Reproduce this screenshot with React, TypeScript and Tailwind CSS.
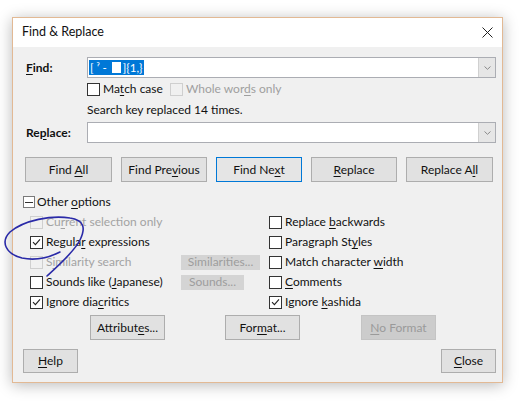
import React from "react";

const U = ({ c }: { c: string }) => <span className="underline underline-offset-2 decoration-1">{c}</span>;

const Check = ({ checked = false, disabled = false }: { checked?: boolean; disabled?: boolean }) => (
  <span
    className={
      "inline-flex items-center justify-center w-[13px] h-[13px] border shrink-0 " +
      (disabled ? "border-[#cfcfcf] bg-[#f0f0f0]" : "border-[#333333] bg-white")
    }
  >
    {checked && (
      <svg width="9" height="8" viewBox="0 0 9 8">
        <path d="M1 4.2 L3.4 6.6 L8 1.4" fill="none" stroke="#222" strokeWidth="1.1" />
      </svg>
    )}
  </span>
);

const Btn = ({ children, w, primary = false }: { children: React.ReactNode; w: string; primary?: boolean }) => (
  <div
    className={
      "h-[25px] flex items-center justify-center border text-[12px] text-[#111] " +
      w +
      " " +
      (primary ? "border-[#0078d7] bg-[#e5e5e5]" : "border-[#adadad] bg-[#e1e1e1]")
    }
  >
    <span className="whitespace-pre">{children}</span>
  </div>
);

const Combo = ({ children }: { children?: React.ReactNode }) => (
  <div className="ml-[61px] w-[409px] h-[21px] flex border border-[#abadb3] bg-white">
    <div className="flex-1 flex items-center pl-[1px]">{children}</div>
    <div className="w-[17px] h-full bg-[#e6e6e6] border-l border-[#d0d0d0] flex items-center justify-center">
      <svg width="7" height="4" viewBox="0 0 7 4">
        <path d="M0.5 0.5 L3.5 3.3 L6.5 0.5" fill="none" stroke="#8a8a8a" strokeWidth="1" />
      </svg>
    </div>
  </div>
);

export default function App() {
  return (
    <div className="relative w-[525px] h-[404px] bg-white overflow-hidden font-['Segoe_UI','Lato','Noto_Sans',sans-serif] text-[12px] text-[#111]">
      <div className="pt-[17px] pl-[12px]">
        <div className="w-[491px] h-[366px] border border-[#e2b994] shadow-[0_2px_14px_rgba(0,0,0,0.28)] flex flex-col">
          {/* title bar */}
          <div className="h-[29px] bg-white flex items-center justify-between pl-[9px] pr-[9px] shrink-0">
            <span className="text-[12.5px] text-[#111]">Find &amp; Replace</span>
            <svg width="11" height="11" viewBox="0 0 11 11">
              <path d="M0.5 0.5 L10.5 10.5 M10.5 0.5 L0.5 10.5" stroke="#222" strokeWidth="1" />
            </svg>
          </div>
          {/* body */}
          <div className="flex-1 bg-[#f0f0f0] flex flex-col">
            {/* Find row */}
            <div className="mt-[10px] h-[21px] flex items-center pl-[13px]">
              <span className="w-0 whitespace-nowrap font-bold"><U c="F" />ind:</span>
              <Combo>
                <span className="h-[15px] bg-[#0078d7] text-white flex items-center px-[1px] text-[11.5px] whitespace-pre">
                  [ ˀ - <span className="inline-block w-[9px] h-[11px] bg-white mx-[2px]"></span>]{"{1,}"}
                </span>
              </Combo>
            </div>
            {/* Match case row */}
            <div className="mt-[4px] h-[14px] flex items-center pl-[74px]">
              <Check />
              <span className="ml-[3px]">Ma<U c="t" />ch case</span>
              <span className="ml-[7px] flex"><Check disabled /></span>
              <span className="ml-[3px] text-[#9f9f9f]">Whole wor<U c="d" />s only</span>
            </div>
            {/* status */}
            <div className="mt-[7px] h-[14px] flex items-center pl-[74px]">
              <span>Search key replaced 14 times.</span>
            </div>
            {/* Replace row */}
            <div className="mt-[5px] h-[21px] flex items-center pl-[13px]">
              <span className="w-0 whitespace-nowrap font-bold">Re<U c="p" />lace:</span>
              <Combo />
            </div>
            {/* buttons */}
            <div className="mt-[14px] pl-[12px] w-[480px] flex justify-between">
              <Btn w="w-[87px]">Find <U c="A" />ll</Btn>
              <Btn w="w-[86px]">Find Pre<U c="v" />ious</Btn>
              <Btn w="w-[86px]" primary>Find Ne<U c="x" />t</Btn>
              <Btn w="w-[86px]"><U c="R" />eplace</Btn>
              <Btn w="w-[87px]">Replace A<U c="l" />l</Btn>
            </div>
            {/* options grid */}
            <div className="mt-[10px] grid grid-cols-[243px_1fr] grid-rows-[repeat(6,20px)] pl-[13px]">
              <div className="col-span-2 flex items-center -ml-[3px]">
                <span className="w-[12px] h-[12px] border border-[#7a7a7a] bg-white flex items-center justify-center">
                  <span className="w-[8px] h-[1px] bg-[#333]"></span>
                </span>
                <span className="ml-[2px]">Other <U c="o" />ptions</span>
              </div>
              {/* rows */}
              <div className="flex items-center pl-[4px] text-[#a3a3a3]">
                <Check disabled />
                <span className="ml-[3px]">Cu<U c="r" />rent selection only</span>
              </div>
              <div className="flex items-center">
                <Check />
                <span className="ml-[3px]">Replace <U c="b" />ackwards</span>
              </div>
              <div className="flex items-center pl-[4px]">
                <Check checked />
                <span className="ml-[3px]">Regula<U c="r" /> expressions</span>
              </div>
              <div className="flex items-center">
                <Check />
                <span className="ml-[3px]">Paragraph St<U c="y" />les</span>
              </div>
              <div className="flex items-center pl-[4px] text-[#a3a3a3]">
                <Check disabled />
                <span className="ml-[3px] w-[135px]">S<U c="i" />milarity search</span>
                <span className="h-[15px] w-[79px] bg-[#d4d4d4] flex items-center justify-center text-[#9d9d9d]">Similarities...</span>
              </div>
              <div className="flex items-center">
                <Check />
                <span className="ml-[3px]">Match character <U c="w" />idth</span>
              </div>
              <div className="flex items-center pl-[4px]">
                <Check />
                <span className="ml-[3px] w-[135px]">Sounds like (<U c="J" />apanese)</span>
                <span className="h-[15px] w-[63px] bg-[#d4d4d4] flex items-center justify-center text-[#9d9d9d]">Sounds...</span>
              </div>
              <div className="flex items-center">
                <Check />
                <span className="ml-[3px]"><U c="C" />omments</span>
              </div>
              <div className="flex items-center pl-[4px]">
                <Check checked />
                <span className="ml-[3px]">Ignore dia<U c="c" />ritics</span>
              </div>
              <div className="flex items-center">
                <Check checked />
                <span className="ml-[3px]">Ignore <U c="k" />ashida</span>
              </div>
            </div>
            {/* attributes row */}
            <div className="mt-[3px] flex pl-[77px]">
              <Btn w="w-[75px]">Attribut<U c="e" />s...</Btn>
              <div className="ml-[60px]"><Btn w="w-[75px]">For<U c="m" />at...</Btn></div>
              <div className="ml-[61px] h-[25px] w-[75px] flex items-center justify-center bg-[#cccccc] border border-[#c4c4c4] text-[#9a9a9a]">
                <span><U c="N" />o Format</span>
              </div>
            </div>
            {/* help/close */}
            <div className="mt-[9px] flex justify-between pl-[10px] pr-[6px]">
              <div className="h-[24px] w-[55px] flex items-center justify-center border border-[#adadad] bg-[#e1e1e1]"><span><U c="H" />elp</span></div>
              <div className="h-[24px] w-[55px] flex items-center justify-center border border-[#adadad] bg-[#e1e1e1]"><span><U c="C" />lose</span></div>
            </div>
          </div>
        </div>
      </div>
      {/* hand-drawn annotation */}
      <svg className="absolute left-0 top-0 pointer-events-none" width="525" height="404" viewBox="0 0 525 404">
        <path
          d="M47 276 C58 266 74 252 80 240 C86 228 84 220 70 218 C52 215 24 220 10 232 C0 242 6 254 22 258 C36 261 50 257 60 252"
          fill="none"
          stroke="#2a2aa8"
          strokeWidth="1.6"
          strokeLinecap="round"
        />
      </svg>
    </div>
  );
}
